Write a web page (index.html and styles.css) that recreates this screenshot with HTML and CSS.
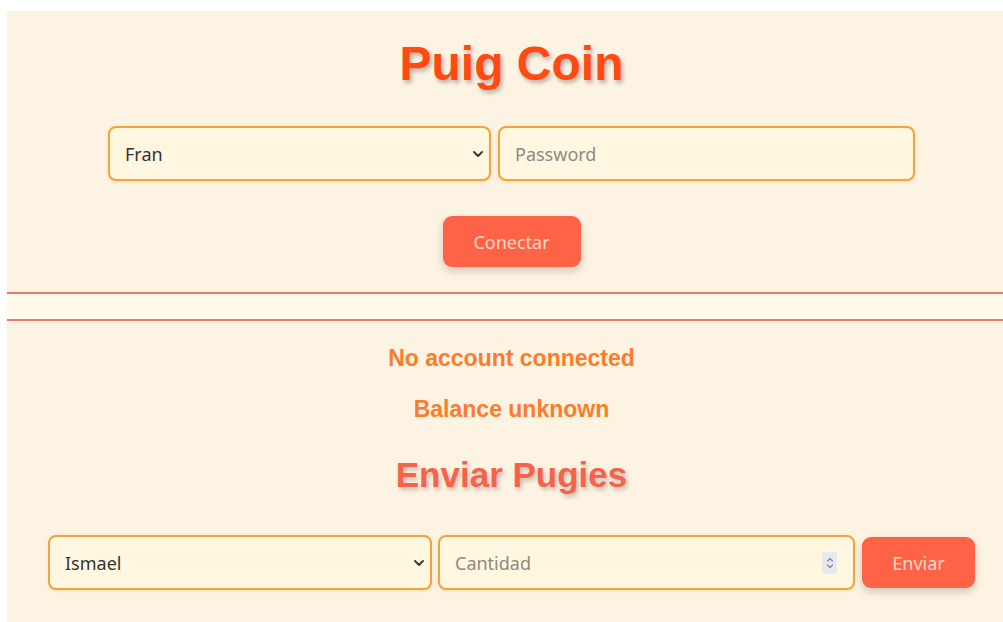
FILE: index.html
```html
<!DOCTYPE html>
<html lang="es">
<head>
<meta charset="utf-8">
<title>Puig Coin</title>
<link rel="stylesheet" href="styles.css">
</head>
<body>
<div class="app">
  <section class="login">
    <h1 class="title">Puig Coin</h1>
    <div class="row">
      <div class="select-wrap wide-a">
        <select class="field">
          <option>Fran</option>
          <option>Ismael</option>
        </select>
        <svg class="chev" viewBox="0 0 10 6" width="10" height="6"><path d="M1 1l4 4 4-4" fill="none" stroke="#333" stroke-width="1.8" stroke-linecap="round" stroke-linejoin="round"/></svg>
      </div>
      <input class="field wide-b" type="password" placeholder="Password">
    </div>
    <button class="btn btn-connect">Conectar</button>
  </section>
  <div class="spacer"></div>
  <section class="wallet">
    <p class="status">No account connected</p>
    <p class="status">Balance unknown</p>
    <h2 class="subtitle">Enviar Pugies</h2>
    <div class="row send">
      <div class="select-wrap wide-c">
        <select class="field">
          <option>Ismael</option>
          <option>Fran</option>
        </select>
        <svg class="chev" viewBox="0 0 10 6" width="10" height="6"><path d="M1 1l4 4 4-4" fill="none" stroke="#333" stroke-width="1.8" stroke-linecap="round" stroke-linejoin="round"/></svg>
      </div>
      <div class="num-wrap wide-d">
        <input class="field" type="text" placeholder="Cantidad">
        <span class="spin">
          <svg viewBox="0 0 8 14" width="8" height="14"><path d="M1.5 5l2.5-2.5 2.5 2.5M1.5 9l2.5 2.5 2.5-2.5" fill="none" stroke="#7a8aa0" stroke-width="1.2" stroke-linecap="round" stroke-linejoin="round"/></svg>
        </span>
      </div>
      <button class="btn btn-send">Enviar</button>
    </div>
  </section>
</div>
</body>
</html>
```
FILE: styles.css
```css
html, body {
  margin: 0;
  padding: 0;
  overflow: hidden;
  background: #ffffff;
}

.app {
  margin: 11px 0 0 7px;
  width: 1009px;
  background: #fffaec;
  font-family: "Noto Sans", "Open Sans", sans-serif;
}

.login {
  background: #fdf3e3;
  border-bottom: 2px solid #ec7a68;
  padding: 25px 0 25px;
  display: flex;
  flex-direction: column;
  align-items: center;
}

.spacer {
  height: 25px;
}

.wallet {
  background: #fdf3e3;
  border-top: 2px solid #ec7a68;
  padding: 24px 0 40px;
  display: flex;
  flex-direction: column;
  align-items: center;
}

.title {
  margin: 0 0 34px;
  font-family: "Liberation Sans", Arial, sans-serif;
  font-weight: 700;
  font-size: 48px;
  line-height: 56px;
  color: #ff4a12;
  text-shadow: 2px 3px 4px rgba(0, 0, 0, 0.28);
}

.row {
  display: flex;
  gap: 7px;
  align-items: center;
}

.send {
  gap: 6px;
}

.send .num-wrap {
  margin-right: 1px;
}

.field {
  box-sizing: border-box;
  height: 55px;
  width: 100%;
  border: 2px solid #f3a33a;
  border-radius: 8px;
  background: #fff7df;
  font-family: "Noto Sans", sans-serif;
  font-size: 18px;
  color: #333;
  padding: 0 15px;
  outline: none;
  appearance: none;
  -webkit-appearance: none;
  box-shadow: 0 1px 3px rgba(230, 160, 60, 0.25);
}

.field::placeholder {
  color: #8e8a80;
}

.select-wrap,
.num-wrap {
  position: relative;
}

.chev {
  position: absolute;
  right: 8px;
  top: 25px;
  pointer-events: none;
}

.spin {
  position: absolute;
  right: 18px;
  top: 17px;
  width: 15px;
  height: 22px;
  background: #e6e9ef;
  border-radius: 3px;
  display: flex;
  align-items: center;
  justify-content: center;
  pointer-events: none;
}

.wide-a { width: 383px; }
.wide-b { width: 417px; }
.wide-c { width: 384px; }
.wide-d { width: 417px; }

.btn {
  border: none;
  border-radius: 9px;
  background: #ff6347;
  color: #ffd9c4;
  font-family: "Noto Sans", sans-serif;
  font-size: 18px;
  height: 51px;
  box-shadow: 0 4px 8px rgba(0, 0, 0, 0.18);
  cursor: pointer;
}

.btn-connect {
  margin-top: 35px;
  width: 138px;
}

.btn-send {
  width: 113px;
}

.status {
  margin: 0;
  font-family: "Liberation Sans", Arial, sans-serif;
  font-weight: 700;
  font-size: 23px;
  line-height: 27px;
  color: #fb7c2c;
}

.status + .status {
  margin-top: 24px;
}

.subtitle {
  margin: 32px 0 40px;
  font-family: "Liberation Sans", Arial, sans-serif;
  font-weight: 700;
  font-size: 35px;
  line-height: 40px;
  color: #f5634a;
  text-shadow: 2px 3px 4px rgba(0, 0, 0, 0.22);
}
```
